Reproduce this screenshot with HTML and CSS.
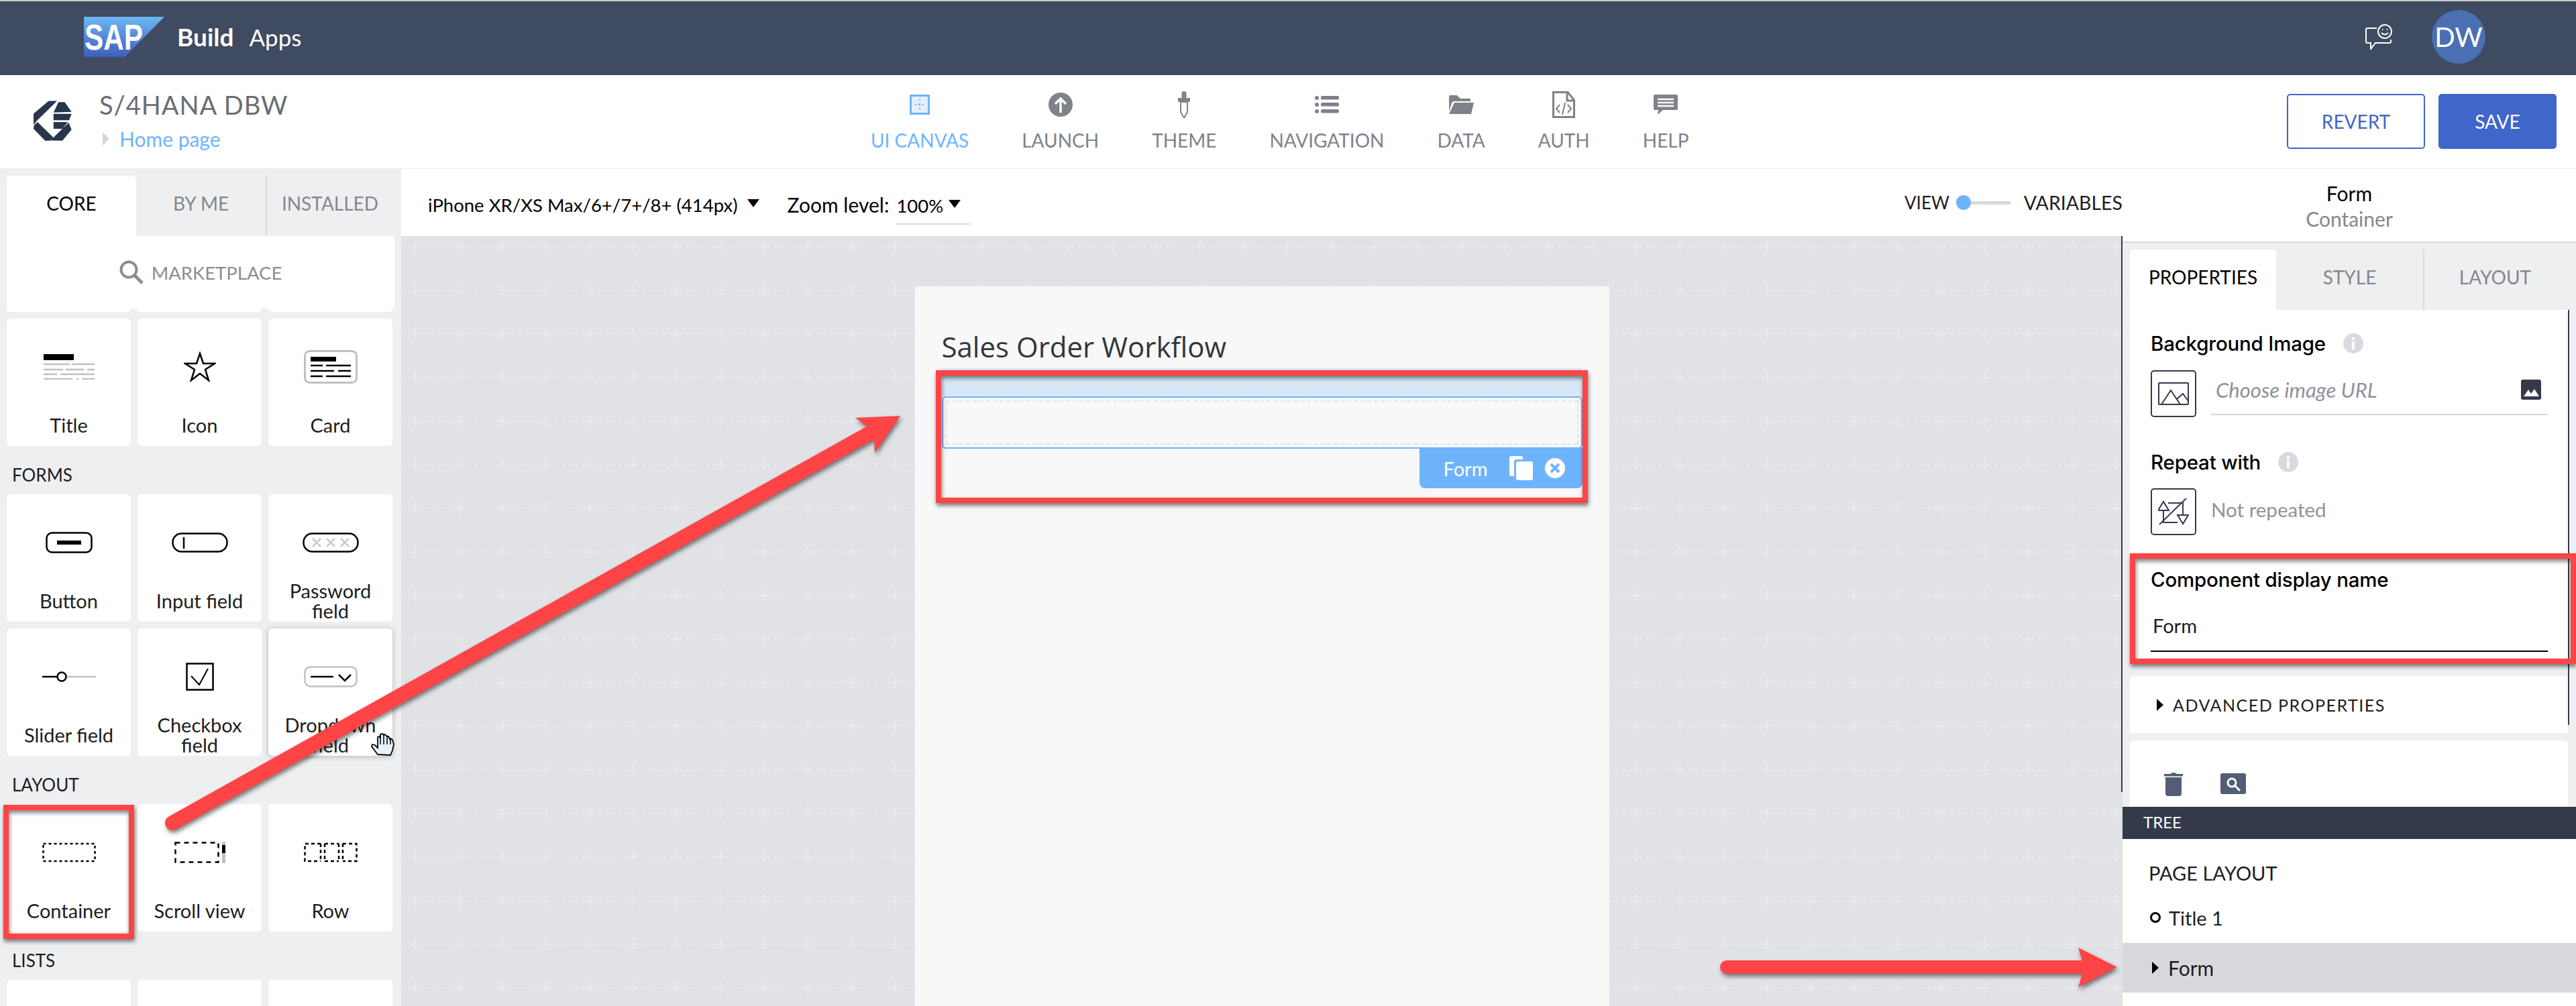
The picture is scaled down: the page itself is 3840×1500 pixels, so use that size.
FILE: index.html
```html
<!DOCTYPE html>
<html lang="en">
<head>
  <meta charset="UTF-8">
  <title>SAP Build Apps - UI Canvas</title>
  <link rel="stylesheet" href="styles.css">
</head>
<body>

  <header class="topbar">
    <svg class="sap-logo" viewBox="0 0 120 60" width="120" height="60">
      <defs>
        <linearGradient id="sapBlue" x1="0" y1="0" x2="0" y2="1">
          <stop offset="0" stop-color="#6cb8f4"/>
          <stop offset="1" stop-color="#3d5ebd"/>
        </linearGradient>
      </defs>
      <polygon points="0,0 120,0 61,60 0,60" fill="url(#sapBlue)"/>
      <text x="1" y="49" class="sap-word" textLength="87" lengthAdjust="spacingAndGlyphs">SAP</text>
    </svg>
    <span class="brand-build">Build</span>
    <span class="brand-apps">Apps</span>
    <div class="topbar-right">
      <svg viewBox="0 0 40 38" width="40" height="38" fill="none" stroke="#fff" stroke-width="2">
        <path d="M17 6H3Q1 6 1 8V26Q1 28 3 28H8L8 37L15 28H36Q38 28 38 26V23"/>
        <circle cx="29" cy="11" r="10"/>
        <circle cx="25.500" cy="8" r="1" fill="#fff" stroke="none"/>
        <circle cx="32.500" cy="8" r="1" fill="#fff" stroke="none"/>
        <path d="M24 13Q29 18 34 13"/>
      </svg>
      <div class="avatar">DW</div>
    </div>
  </header>

  <section class="subbar">
    <div class="app-info">
      <svg class="app-logo" viewBox="60 422 172 180" width="57" height="60" fill="#29354a">
        <polygon points="128,423 166,423 75,512 60,530 60,480"/>
        <polygon points="172,428 200,428 231,472 150,475"/>
        <polygon points="150,481 231,481 220,510 150,510"/>
        <polygon points="150,518 214,518 190,548 150,548"/>
        <polygon points="62,532 78,518 150,588 134,602 112,602 60,548"/>
        <polygon points="136,601 218,520 231,552 190,602"/>
      </svg>
      <div>
        <div class="app-title">S/4HANA DBW</div>
        <div class="crumb"><span class="crumb-arrow"></span>Home page</div>
      </div>
    </div>

    <nav class="mainnav">
      <a class="nav-item active">
        <span class="nav-icon">
          <svg viewBox="0 0 30 30" width="30" height="30">
            <rect x="1.500" y="1.500" width="27" height="27" fill="#e4f0fe" stroke="#6eb4fd" stroke-width="3"/>
            <path d="M15 7v3M15 13v4M15 20v3M8 15h3M13 15h4M19 15h3" stroke="#6eb4fd" stroke-width="2" stroke-dasharray="2 1.500"/>
          </svg>
        </span>
        UI CANVAS
      </a>
      <a class="nav-item">
        <span class="nav-icon">
          <svg viewBox="0 0 36 36" width="36" height="36">
            <circle cx="18" cy="18" r="18" fill="#7f8289"/>
            <path d="M18 30V10M10 17L18 9L26 17" fill="none" stroke="#fff" stroke-width="3.500"/>
          </svg>
        </span>
        LAUNCH
      </a>
      <a class="nav-item">
        <span class="nav-icon">
          <svg viewBox="0 0 20 40" width="20" height="40" fill="#7f8289">
            <rect x="6.500" y="0" width="7" height="11" rx="3.500"/>
            <rect x="1" y="10" width="18" height="6" rx="1"/>
            <path d="M5 16H15V31L10 40L5 31Z" fill="#fff" stroke="#7f8289" stroke-width="2"/>
          </svg>
        </span>
        THEME
      </a>
      <a class="nav-item">
        <span class="nav-icon">
          <svg viewBox="0 0 36 26" width="36" height="26" fill="#7f8289">
            <circle cx="3" cy="3" r="3"/><rect x="9" y="0" width="27" height="5.500" rx="2"/>
            <circle cx="3" cy="13" r="3"/><rect x="9" y="10" width="27" height="5.500" rx="2"/>
            <circle cx="3" cy="23" r="3"/><rect x="9" y="20" width="27" height="5.500" rx="2"/>
          </svg>
        </span>
        NAVIGATION
      </a>
      <a class="nav-item">
        <span class="nav-icon">
          <svg viewBox="0 0 37 28" width="37" height="28" fill="#7f8289">
            <path d="M0 2Q0 0 2 0H12L17 5H32V9H8Q5 9 4 12L0 24Z"/>
            <path d="M8 11H37L33 28H0Z"/>
          </svg>
        </span>
        DATA
      </a>
      <a class="nav-item">
        <span class="nav-icon">
          <svg viewBox="0 0 34 40" width="34" height="40" fill="none" stroke="#7f8289">
            <path d="M1.500 1.500H23L32.500 13V38.500H1.500Z" stroke-width="3"/>
            <path d="M22 2V14H32" stroke-width="3"/>
            <path d="M11 20L6 26L11 32M23 20L28 26L23 32M19 17L15 35" stroke-width="2"/>
          </svg>
        </span>
        AUTH
      </a>
      <a class="nav-item">
        <span class="nav-icon">
          <svg viewBox="0 0 36 30" width="36" height="30">
            <path d="M2 0H34Q36 0 36 2V21Q36 23 34 23H14L6 30L7 23H2Q0 23 0 21V2Q0 0 2 0Z" fill="#7f8289"/>
            <path d="M6 7H30M6 12H30M6 17H30" stroke="#fff" stroke-width="2.500"/>
          </svg>
        </span>
        HELP
      </a>
    </nav>

    <div class="actions">
      <button class="btn btn-revert">REVERT</button>
      <button class="btn btn-save">SAVE</button>
    </div>
  </section>

  <div class="workspace">
    <aside class="sidebar">
      <div class="tabs">
        <div class="tab active">CORE</div>
        <div class="tab">BY ME</div>
        <div class="tab">INSTALLED</div>
      </div>
      <div class="marketplace">
        <svg viewBox="0 0 36 36" width="36" height="36" fill="none" stroke="#8b8d93">
          <circle cx="14" cy="14" r="11.500" stroke-width="4"/>
          <path d="M23 23L34 34" stroke-width="5"/>
        </svg>
        MARKETPLACE
      </div>
      <div class="card-peek"><span></span><span></span><span></span></div>

      <div class="card-grid first">
        <div class="card">
          <svg class="card-icon" viewBox="0 0 76 38" width="76" height="38">
            <rect x="0" y="0" width="45" height="9" fill="#000"/>
            <path d="M0 15H39M42 15H76M0 23H29M33 23H60M65 23H76M0 30H20M25 30H76M0 37H43M49 37H52M57 37H76" stroke="#c0c1c7" stroke-width="2.500"/>
          </svg>
          <div class="card-label">Title</div>
        </div>
        <div class="card">
          <svg class="card-icon" viewBox="0 0 48 46" width="48" height="46">
            <path d="M24 3L29 18H46L32 27L37 43L24 33L11 43L16 27L2 18H19Z" fill="none" stroke="#000" stroke-width="2.500"/>
          </svg>
          <div class="card-label">Icon</div>
        </div>
        <div class="card">
          <svg class="card-icon" viewBox="0 0 80 50" width="80" height="50">
            <rect x="1.500" y="1.500" width="77" height="47" rx="7" fill="#fff" stroke="#c0c1c7" stroke-width="3"/>
            <rect x="10" y="10" width="38" height="7" fill="#000"/>
            <path d="M10 23H28M33 23H70M10 31H45M51 31H70M10 39H28M33 39H70" stroke="#000" stroke-width="2.500"/>
          </svg>
          <div class="card-label">Card</div>
        </div>
      </div>

      <div class="section-title">FORMS</div>
      <div class="card-grid">
        <div class="card">
          <svg class="card-icon" viewBox="0 0 70 32" width="70" height="32">
            <rect x="1.500" y="1.500" width="67" height="29" rx="8" fill="none" stroke="#000" stroke-width="2.500"/>
            <rect x="17" y="13" width="36" height="6" fill="#000"/>
          </svg>
          <div class="card-label">Button</div>
        </div>
        <div class="card">
          <svg class="card-icon" viewBox="0 0 84 30" width="84" height="30">
            <rect x="1.500" y="1.500" width="81" height="27" rx="13" fill="none" stroke="#000" stroke-width="2.500"/>
            <path d="M18 7V24" stroke="#000" stroke-width="2.500"/>
          </svg>
          <div class="card-label">Input field</div>
        </div>
        <div class="card">
          <svg class="card-icon" viewBox="0 0 84 30" width="84" height="30">
            <rect x="1.500" y="1.500" width="81" height="27" rx="13" fill="none" stroke="#000" stroke-width="2.500"/>
            <path d="M15 9L27 21M27 9L15 21M36 9L48 21M48 9L36 21M57 9L69 21M69 9L57 21" stroke="#c8c9cd" stroke-width="2.500"/>
          </svg>
          <div class="card-label">Password field</div>
        </div>
        <div class="card">
          <svg class="card-icon" viewBox="0 0 80 16" width="80" height="16">
            <path d="M0 8H22" stroke="#000" stroke-width="2.500"/>
            <circle cx="29" cy="8" r="6.500" fill="#fff" stroke="#000" stroke-width="2.500"/>
            <path d="M37 8H80" stroke="#c0c1c7" stroke-width="2.500"/>
          </svg>
          <div class="card-label">Slider field</div>
        </div>
        <div class="card">
          <svg class="card-icon" viewBox="0 0 42 42" width="42" height="42">
            <rect x="1.500" y="1.500" width="39" height="39" fill="none" stroke="#000" stroke-width="2.500"/>
            <path d="M8 20L20 33L33 9" fill="none" stroke="#000" stroke-width="2"/>
          </svg>
          <div class="card-label">Checkbox field</div>
        </div>
        <div class="card hovered">
          <svg class="card-icon" viewBox="0 0 80 32" width="80" height="32">
            <rect x="1.500" y="1.500" width="77" height="29" rx="8" fill="#fff" stroke="#c0c1c7" stroke-width="2.500"/>
            <path d="M10 16H44" stroke="#000" stroke-width="2.500"/>
            <path d="M52 13L61 22L70 13" fill="none" stroke="#000" stroke-width="2.500"/>
          </svg>
          <div class="card-label">Dropdown field</div>
        </div>
      </div>

      <div class="section-title">LAYOUT</div>
      <div class="card-grid">
        <div class="card">
          <svg class="card-icon" viewBox="0 0 80 32" width="80" height="32">
            <rect x="1.500" y="3" width="77" height="26" fill="none" stroke="#000" stroke-width="2.500" stroke-dasharray="4 4"/>
          </svg>
          <div class="card-label">Container</div>
        </div>
        <div class="card">
          <svg class="card-icon" viewBox="0 0 76 32" width="76" height="32">
            <rect x="1.500" y="1.500" width="64" height="29" fill="none" stroke="#000" stroke-width="2.500" stroke-dasharray="7 6"/>
            <rect x="71" y="0" width="5" height="32" fill="#c0c1c7"/>
            <rect x="71" y="5" width="5" height="12" fill="#000"/>
          </svg>
          <div class="card-label">Scroll view</div>
        </div>
        <div class="card">
          <svg class="card-icon" viewBox="0 0 80 32" width="80" height="32">
            <path d="M25 3H1.500V29H25M31 3H52M31 29H52M58 3H78.500V29H58M25 3V29M31 3V29M52 3V29M58 3V29" fill="none" stroke="#000" stroke-width="2.500" stroke-dasharray="5 4"/>
          </svg>
          <div class="card-label">Row</div>
        </div>
      </div>

      <div class="section-title">LISTS</div>
      <div class="card-grid">
        <div class="card"></div>
        <div class="card"></div>
        <div class="card"></div>
      </div>
    </aside>

    <main class="center">
      <div class="toolbar">
        <span class="tool-text">iPhone XR/XS Max/6+/7+/8+ (414px)</span>
        <span class="caret"></span>
        <span class="tool-text zoom-label">Zoom level:</span>
        <span class="zoom-value"><span class="tool-text">100%</span><span class="caret"></span></span>
        <div class="view-toggle">
          <span>VIEW</span>
          <span class="toggle-knob"></span>
          <span class="toggle-track"></span>
          <span class="toggle-vars">VARIABLES</span>
        </div>
      </div>

      <div class="canvas">
        <svg class="canvas-grid" width="2566" height="1148">
          <defs>
            <pattern id="gridTile" x="20" y="15" width="65" height="65" patternUnits="userSpaceOnUse">
              <path d="M0 1H9M56 1H65" stroke="#e9eaec" stroke-width="2"/>
              <path d="M1 0V9M1 56V65" stroke="#e9eaec" stroke-width="2"/>
              <path d="M14 1H52" stroke="#e6e7ea" stroke-width="2" stroke-dasharray="6 4"/>
              <path d="M1 14V52" stroke="#e3e4e7" stroke-width="2" stroke-dasharray="6 4"/>
            </pattern>
          </defs>
          <rect width="2566" height="1148" fill="url(#gridTile)"/>
        </svg>

        <div class="phone">
          <div class="phone-title">Sales Order Workflow</div>
          <div class="selected-band"></div>
          <div class="selected-form"><div class="selected-dash"></div></div>
          <div class="form-tag">
            <span>Form</span>
            <svg viewBox="0 0 35 36" width="35" height="36" fill="#fff">
              <path d="M3 0H17Q20 0 20 3V5H11Q7 5 7 9V30H3Q0 30 0 27V3Q0 0 3 0Z"/>
              <rect x="10" y="8" width="25" height="28" rx="3"/>
            </svg>
            <svg viewBox="0 0 30 30" width="30" height="30">
              <circle cx="15" cy="15" r="15" fill="#fff"/>
              <path d="M9 9L21 21M21 9L9 21" stroke="#6eb4fd" stroke-width="4"/>
            </svg>
          </div>
        </div>
        <div class="canvas-edge"></div>
      </div>
    </main>

    <aside class="inspector">
      <div class="inspector-head">
        <div class="head-name">Form</div>
        <div class="head-type">Container</div>
      </div>
      <div class="inspector-scroll">
        <div class="tabs inspector-tabs">
          <div class="tab active">PROPERTIES</div>
          <div class="tab">STYLE</div>
          <div class="tab">LAYOUT</div>
        </div>
        <div class="panel panel-props">
          <div class="prop-label">Background Image
            <svg class="info" viewBox="0 0 30 30" width="30" height="30">
              <circle cx="15" cy="15" r="15" fill="#d8dadf"/>
              <rect x="13" y="12" width="4" height="12" fill="#fff"/>
              <rect x="13" y="6" width="4" height="4" fill="#fff"/>
            </svg>
          </div>
          <div class="prop-row">
            <div class="icon-box">
              <svg viewBox="0 0 46 34" width="46" height="34" fill="none" stroke="#353a4b" stroke-width="2">
                <rect x="1" y="1" width="44" height="32" rx="1"/>
                <path d="M5 33L19 12L33 33M28 25L37 17L45 28"/>
              </svg>
            </div>
            <div class="url-field">
              <span>Choose image URL</span>
              <svg viewBox="0 0 30 30" width="30" height="30">
                <rect width="30" height="30" rx="3" fill="#353a4b"/>
                <path d="M4 25L11 15L15 21L20 14L27 25Z" fill="#fff"/>
              </svg>
            </div>
          </div>

          <div class="prop-label spaced">Repeat with
            <svg class="info" viewBox="0 0 30 30" width="30" height="30">
              <circle cx="15" cy="15" r="15" fill="#d8dadf"/>
              <rect x="13" y="12" width="4" height="12" fill="#fff"/>
              <rect x="13" y="6" width="4" height="4" fill="#fff"/>
            </svg>
          </div>
          <div class="prop-row">
            <div class="icon-box">
              <svg viewBox="0 0 46 40" width="46" height="40" fill="none" stroke="#353a4b" stroke-width="2">
                <path d="M8 18V36H29M15 7H37V25"/>
                <path d="M8 5L0 18H16ZM37 38L29 25H45Z" fill="#fff"/>
                <path d="M2 39L42 0"/>
              </svg>
            </div>
            <span class="not-repeated">Not repeated</span>
          </div>

          <div class="prop-label spaced">Component display name</div>
          <div class="name-input">Form</div>
        </div>

        <div class="panel panel-advanced"><span class="tri-right"></span>ADVANCED PROPERTIES</div>

        <div class="panel panel-tools">
          <svg viewBox="0 0 28 36" width="28" height="36" fill="#555c75">
            <path d="M0 3H9Q14 -1 19 3H28V6.500H0Z"/>
            <path d="M2 8H26V32Q26 36 22 36H6Q2 36 2 32Z"/>
          </svg>
          <svg viewBox="0 0 38 31" width="38" height="31">
            <rect width="38" height="31" rx="3" fill="#555c75"/>
            <circle cx="17" cy="14" r="6" fill="none" stroke="#fff" stroke-width="3"/>
            <path d="M21 18L29 26" stroke="#fff" stroke-width="3"/>
          </svg>
        </div>
      </div>

      <div class="tree">
        <div class="tree-head">TREE</div>
        <div class="tree-title">PAGE LAYOUT</div>
        <div class="tree-row"><span class="tree-dot"></span>Title 1</div>
        <div class="tree-row selected"><span class="tri-right"></span>Form</div>
      </div>
    </aside>
  </div>

  <!-- annotations on top of the screenshot -->
  <div class="mark mark-container"></div>
  <div class="mark mark-form"></div>
  <div class="mark mark-name"></div>

  <svg class="arrows" width="3840" height="1500">
    <g fill="#ff4446" stroke="none">
      <path d="M257 1227L1298 645" stroke="#ff4446" stroke-width="22" stroke-linecap="round"/>
      <polygon points="1342,620 1275,623 1293,636 1303,653 1304,675"/>
      <path d="M2574 1442H3105" stroke="#ff4446" stroke-width="20" stroke-linecap="round"/>
      <polygon points="3156,1442 3098,1413 3107,1442 3098,1472"/>
    </g>
  </svg>

  <svg class="hand" viewBox="0 0 36 36" width="36" height="36">
    <path d="M11 33L2 21L3 18L7 19L11 23L11 7L13 6L15 8L15 3L18 2L20 4L21 3L24 5L25 6L27 6L29 10L30 9L33 11L35 18L33 27L30 34Z" fill="#e6f2f9" stroke="#000" stroke-width="1.800"/>
    <path d="M15 8V18M20 4V18M25 6V18M30 9V18" stroke="#000" stroke-width="1.500" fill="none"/>
  </svg>

</body>
</html>
```

FILE: styles.css
```css
* {
  box-sizing: border-box;
}
html, body {
  margin: 0;
  height: 1500px;
  overflow: hidden;
}
body {
  position: relative;
  width: 3840px;
  font-family: Lato, "Open Sans", sans-serif;
  font-size: 28px;
  color: #1d1d1f;
  background-color: #fff;
}

/* top bar */
.topbar {
  display: flex;
  align-items: center;
  height: 112px;
  border-top: 2px solid #c8c9c9;
  background-color: #3f4b60;
  padding: 0 135px 5px 125px;
  color: #fff;
}
.sap-word {
  font-family: "Liberation Sans", sans-serif;
  font-weight: bold;
  font-size: 54px;
  fill: #fff;
}
.brand-build {
  margin-left: 19px;
  font-size: 37px;
  font-weight: bold;
}
.brand-apps {
  margin-left: 23px;
  font-size: 35px;
}
.topbar-right {
  display: flex;
  align-items: center;
  gap: 59px;
  margin-left: auto;
}
.avatar {
  display: flex;
  align-items: center;
  justify-content: center;
  width: 80px;
  height: 80px;
  border-radius: 50%;
  background-color: #4a6fb3;
  font-size: 40px;
}

/* app bar */
.subbar {
  display: grid;
  grid-template-columns: 1298px auto 1fr;
  height: 140px;
  border-bottom: 2px solid #f2f3f4;
}
.app-info {
  display: flex;
  padding: 22px 0 0 50px;
}
.app-logo {
  margin: 16px 41px 0 0;
}
.app-title {
  line-height: 44px;
  font-size: 38px;
  letter-spacing: 1px;
  color: #6a6d75;
}
.crumb {
  display: flex;
  align-items: center;
  margin: 12px 0 0 5px;
  line-height: 34px;
  font-size: 30px;
  color: #6eb4fd;
}
.crumb-arrow {
  width: 0;
  height: 0;
  margin-right: 15px;
  border-left: 10px solid #d4d5d9;
  border-top: 10px solid transparent;
  border-bottom: 10px solid transparent;
}
.mainnav {
  display: flex;
  gap: 79px;
  padding-top: 22px;
}
.nav-item {
  display: flex;
  flex-direction: column;
  align-items: center;
  font-size: 28px;
  line-height: 34px;
  color: #7f8289;
}
.nav-item.active {
  color: #6eb4fd;
}
.nav-icon {
  display: flex;
  align-items: center;
  justify-content: center;
  height: 44px;
  margin-bottom: 14px;
}
.actions {
  display: flex;
  justify-content: flex-end;
  gap: 20px;
  padding: 28px 29px 0 0;
}
.btn {
  height: 82px;
  border: 2px solid #3f66c9;
  border-radius: 5px;
  font-family: inherit;
  font-size: 28px;
}
.btn-revert {
  width: 206px;
  background-color: #fff;
  color: #3f66c9;
}
.btn-save {
  width: 176px;
  background-color: #3f66c9;
  color: #fff;
}

/* layout */
.workspace {
  display: flex;
  height: 1248px;
}
.sidebar {
  flex: 0 0 598px;
  background-color: #eeeff1;
  overflow: hidden;
}
.center {
  flex: 0 0 2566px;
}
.inspector {
  flex: 0 0 676px;
  display: flex;
  flex-direction: column;
  background-color: #eeeff1;
}

/* tabs */
.tabs {
  display: flex;
  height: 100px;
  padding: 10px 0 0 10px;
}
.tab {
  flex: 0 0 193px;
  padding-top: 24px;
  text-align: center;
  color: #85878e;
}
.tab:last-child {
  flex: 1;
  padding-right: 12px;
  border-left: 2px solid #d8d9dd;
}
.tab.active {
  background-color: #fff;
  border-radius: 6px 6px 0 0;
  color: #000;
}
.marketplace {
  display: flex;
  align-items: center;
  justify-content: center;
  gap: 12px;
  width: 578px;
  height: 108px;
  margin-left: 10px;
  background-color: #fff;
  color: #8b8d93;
  font-size: 27.500px;
}
.card-peek {
  display: grid;
  grid-template-columns: repeat(3, 185px);
  gap: 10px;
  height: 5px;
  margin: 0 0 10px 10px;
}
.card-peek span {
  background-color: #fff;
  border-radius: 0 0 6px 6px;
}

/* component cards */
.card-grid {
  display: grid;
  grid-template-columns: repeat(3, 185px);
  grid-auto-rows: 190px;
  gap: 10px;
  margin-left: 10px;
}
.section-title {
  height: 72px;
  padding: 24px 0 0 18px;
  line-height: 38px;
  font-size: 26px;
}
.card {
  display: grid;
  grid-template-rows: 144px 30px;
  justify-items: center;
  align-items: center;
  background-color: #fff;
  border-radius: 6px;
}
.card.hovered {
  box-shadow: 0 1px 8px rgba(0, 0, 0, 0.25);
}
.card-label {
  display: flex;
  align-items: center;
  justify-content: center;
  width: 160px;
  height: 30px;
  line-height: 30px;
  text-align: center;
  font-size: 29px;
  color: #1d1d1f;
}

/* canvas */
.toolbar {
  display: flex;
  align-items: center;
  height: 100px;
  padding: 6px 0 0 40px;
  background-color: #fff;
}
.tool-text {
  font-size: 27.500px;
  color: #000;
}
.caret {
  width: 0;
  height: 0;
  margin: -4px 0 0 14px;
  border-top: 12px solid #000;
  border-left: 9px solid transparent;
  border-right: 9px solid transparent;
}
.zoom-label {
  margin-left: 42px;
  font-size: 30px;
}
.zoom-value {
  display: flex;
  align-items: center;
  width: 110px;
  height: 44px;
  margin: 16px 0 0 11px;
  padding-bottom: 12px;
  border-bottom: 2px solid #d8d9dd;
}
.zoom-value .caret {
  margin-left: 8px;
}
.view-toggle {
  display: flex;
  align-items: center;
  margin: -6px 0 0 auto;
  font-size: 26px;
}
.toggle-knob {
  width: 22px;
  height: 22px;
  margin-left: 10px;
  border-radius: 50%;
  background-color: #6eb4fd;
}
.toggle-track {
  width: 59px;
  height: 5px;
  background-color: #d8d9dd;
}
.toggle-vars {
  margin-left: 20px;
  font-size: 28.500px;
}
.canvas {
  position: relative;
  display: flex;
  justify-content: center;
  height: 1148px;
  padding-top: 75px;
  background-color: #e1e2e6;
  overflow: hidden;
}
.canvas-grid {
  position: absolute;
  left: 0;
  top: 0;
}
.canvas-edge {
  position: absolute;
  right: 0;
  top: 0;
  width: 2px;
  height: 829px;
  background-color: #353a4b;
}
.phone {
  position: relative;
  width: 1035px;
  padding: 62px 0 0 40px;
  background-color: #f8f8f8;
}
.phone-title {
  height: 56px;
  line-height: 56px;
  font-family: "Open Sans", sans-serif;
  font-size: 42px;
  color: #32363a;
}
.selected-band {
  width: 955px;
  height: 42px;
  margin-top: 4px;
  background-color: #d6e7f8;
}
.selected-form {
  width: 955px;
  height: 78px;
  padding: 4px;
  border: 2px solid #6eb4fd;
  border-radius: 6px;
}
.selected-dash {
  height: 100%;
  border: 2px dashed #e1e4e7;
}
.form-tag {
  display: flex;
  align-items: center;
  width: 243px;
  height: 60px;
  margin: -1px 0 0 712px;
  padding-left: 36px;
  background-color: #6eb4fd;
  border-radius: 0 0 8px 8px;
  font-size: 29px;
  color: #fff;
}
.form-tag svg:nth-child(2) {
  margin-left: 32px;
}
.form-tag svg:nth-child(3) {
  margin-left: 18px;
}

/* inspector */
.inspector-head {
  height: 110px;
  padding-top: 17px;
  background-color: #fff;
  border-bottom: 2px solid #d8d9dd;
  text-align: center;
  font-size: 30px;
}
.head-name {
  line-height: 38px;
  color: #000;
}
.head-type {
  line-height: 38px;
  color: #85878e;
}
.inspector-scroll {
  position: relative;
  height: 841px;
  padding-left: 11px;
}
.inspector-scroll::before {
  content: "";
  position: absolute;
  left: 664px;
  top: 100px;
  width: 2px;
  height: 619px;
  background-color: #353a4b;
}
.inspector-tabs {
  padding-left: 0;
}
.inspector-tabs .tab {
  flex: 0 0 218px;
}
.inspector-tabs .tab:nth-child(2) {
  flex-basis: 219px;
}
.inspector-tabs .tab:last-child {
  padding-right: 5px;
}
.panel {
  width: 653px;
  background-color: #fff;
}
.panel-props {
  height: 528px;
  padding: 33px 30px 0 31px;
}
.prop-label {
  display: flex;
  align-items: center;
  gap: 26px;
  height: 34px;
  font-family: Inter, Lato, sans-serif;
  font-size: 29.500px;
  font-weight: 500;
  letter-spacing: -0.200px;
  color: #000;
}
.prop-label.spaced {
  margin-top: 49px;
}
.prop-row {
  display: flex;
  align-items: center;
  margin-top: 22px;
}
.icon-box {
  display: flex;
  align-items: center;
  justify-content: center;
  flex: 0 0 68px;
  height: 70px;
  border: 2px solid #353a4b;
  border-radius: 5px;
}
.url-field {
  display: flex;
  justify-content: space-between;
  align-items: center;
  flex: 1;
  height: 68px;
  margin: 0 0 4px 21px;
  padding: 0 10px 6px 8px;
  border-bottom: 2px solid #d8d9dd;
  font-size: 31px;
  font-style: italic;
  color: #8f929a;
}
.not-repeated {
  margin: 0 0 8px 22px;
  font-size: 29.500px;
  color: #8f929a;
}
.name-input {
  height: 55px;
  margin-top: 36px;
  padding-left: 3px;
  line-height: 32px;
  font-size: 29px;
  border-bottom: 2px solid #000;
}
.panel-advanced {
  display: flex;
  align-items: center;
  height: 85px;
  margin-top: 18px;
  padding-left: 40px;
  font-size: 25px;
  letter-spacing: 1.500px;
  border-radius: 6px 6px 0 0;
}
.tri-right {
  width: 0;
  height: 0;
  margin-right: 14px;
  border-left: 10px solid #000;
  border-top: 9px solid transparent;
  border-bottom: 9px solid transparent;
}
.panel-tools {
  display: flex;
  align-items: center;
  gap: 56px;
  height: 99px;
  margin-top: 11px;
  padding: 30px 0 0 51px;
  border-radius: 6px 6px 0 0;
}

/* tree */
.tree {
  flex: 1;
  background-color: #fff;
}
.tree-head {
  height: 48px;
  padding-left: 31px;
  line-height: 46px;
  font-size: 24px;
  background-color: #353a4b;
  color: #fff;
}
.tree-title {
  margin-top: 34px;
  padding-left: 39px;
  line-height: 34px;
  font-size: 29px;
}
.tree-row {
  display: flex;
  align-items: center;
  height: 87px;
  padding: 11px 0 0 41px;
  font-size: 29px;
}
.tree-row.selected {
  height: 74px;
  padding: 0 0 0 44px;
  font-size: 30px;
  background-color: #d8d9dd;
}
.tree-dot {
  width: 16px;
  height: 16px;
  margin-right: 12px;
  border: 3px solid #000;
  border-radius: 50%;
}

/* annotations */
.mark {
  position: absolute;
  border: 8px solid #ff4446;
  box-shadow: 1px 4px 6px rgba(0, 0, 0, 0.5), inset 1px 4px 6px rgba(0, 0, 0, 0.5);
}
.mark-container {
  left: 5px;
  top: 1200px;
  width: 195px;
  height: 200px;
}
.mark-form {
  left: 1395px;
  top: 552px;
  width: 972px;
  height: 198px;
}
.mark-name {
  left: 3175px;
  top: 825px;
  width: 665px;
  height: 165px;
}
.arrows {
  position: absolute;
  left: 0;
  top: 0;
  filter: drop-shadow(2px 4px 3px rgba(0, 0, 0, 0.5));
}
.hand {
  position: absolute;
  left: 552px;
  top: 1092px;
}
```
